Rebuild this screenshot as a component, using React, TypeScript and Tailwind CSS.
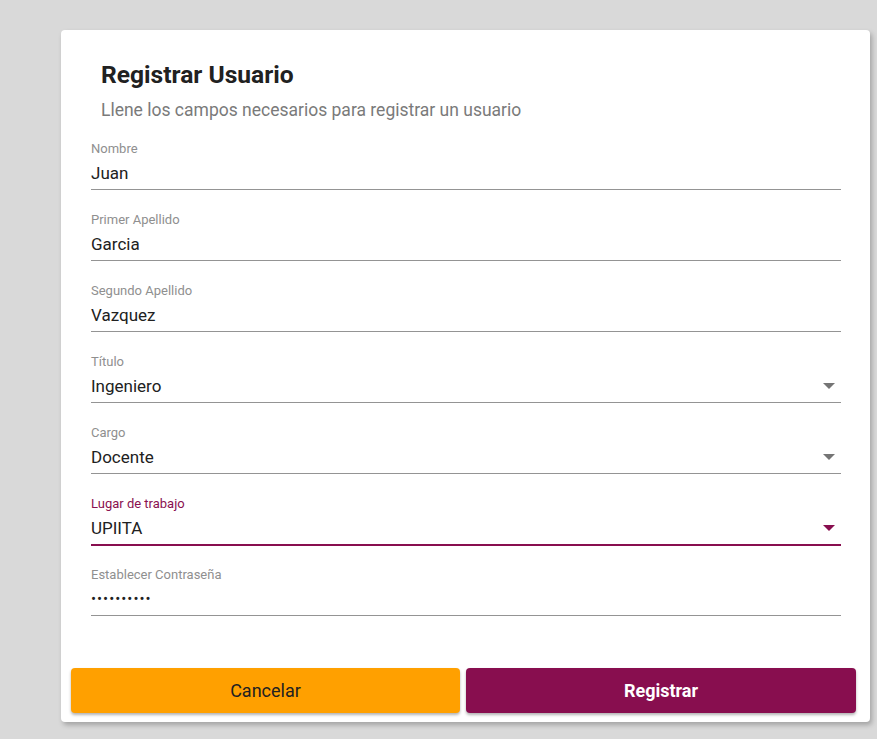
import React from "react";

const fields = [
  { label: "Nombre", value: "Juan" },
  { label: "Primer Apellido", value: "Garcia" },
  { label: "Segundo Apellido", value: "Vazquez" },
  { label: "Título", value: "Ingeniero", select: true },
  { label: "Cargo", value: "Docente", select: true },
  { label: "Lugar de trabajo", value: "UPIITA", select: true, focused: true },
  { label: "Establecer Contraseña", value: "••••••••••", password: true },
];

function Arrow({ color }: { color: string }) {
  return (
    <svg width="12" height="6" viewBox="0 0 12 6" className="mr-[6px]">
      <path d="M0 0 L12 0 L6 6 Z" fill={color} />
    </svg>
  );
}

export default function App() {
  return (
    <div
      className="w-[877px] h-[739px] bg-[#d9d9d9] overflow-hidden pt-[30px] pl-[61px]"
      style={{ fontFamily: "Roboto, 'Noto Sans', sans-serif" }}
    >
      <div className="w-[809px] h-[692px] bg-white rounded-[4px] shadow-[2px_3px_5px_rgba(0,0,0,0.25)] pt-[29px]">
        <div className="pl-[40px]">
          <h1 className="text-[24.6px] leading-[32px] font-bold text-[#212121]">Registrar Usuario</h1>
          <p className="mt-[7px] text-[17.5px] leading-[24px] text-[#7a7a7a]">
            Llene los campos necesarios para registrar un usuario
          </p>
        </div>
        <div className="mt-[19px] ml-[30px] w-[750px] flex flex-col gap-[22px]">
          {fields.map((f) => (
            <div key={f.label}>
              <div
                className={`text-[13px] leading-4 ${f.focused ? "text-[#8a1050]" : "text-[#8f8f8f]"}`}
              >
                {f.label}
              </div>
              <div
                className={`mt-[4px] flex items-center justify-between pb-[4px] ${
                  f.focused ? "border-b-2 border-[#880e4f] -mb-[1px]" : "border-b border-[#949494]"
                }`}
              >
                <span
                  className={`h-[24px] leading-[24px] text-[#212121] ${
                    f.password ? "text-[15px] tracking-[1px]" : "text-[17px]"
                  }`}
                >
                  {f.value}
                </span>
                {f.select && <Arrow color={f.focused ? "#880e4f" : "#757575"} />}
              </div>
            </div>
          ))}
        </div>
        <div className="mt-[52px] ml-[10px] w-[785px] flex gap-[6px]">
          <button className="w-[389px] h-[45px] rounded-[4px] bg-[#ffa000] text-[#212121] text-[18px] font-normal shadow-[0_2px_3px_rgba(0,0,0,0.3)]">
            Cancelar
          </button>
          <button className="w-[390px] h-[45px] rounded-[4px] bg-[#880e4f] text-white text-[18px] font-bold shadow-[0_2px_3px_rgba(0,0,0,0.3)]">
            Registrar
          </button>
        </div>
      </div>
    </div>
  );
}
